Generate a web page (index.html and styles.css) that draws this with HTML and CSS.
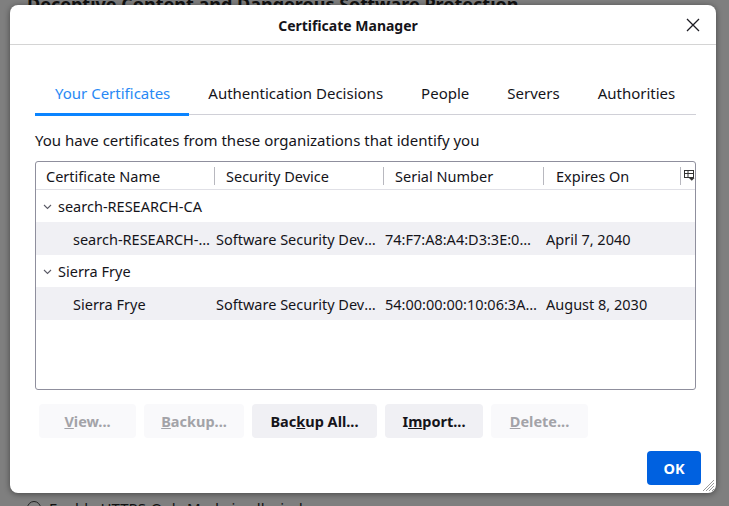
FILE: index.html
```html
<!DOCTYPE html>
<html>
<head>
<meta charset="utf-8">
<link rel="stylesheet" href="styles.css">
</head>
<body>
<div class="backdrop">
  <div class="bg-heading">Deceptive Content and Dangerous Software Protection</div>
  <div class="bg-spacer"></div>
  <div class="bg-option"><span class="bg-radio"></span>Enable HTTPS-Only Mode in all windows</div>
</div>

<div class="dialog">
  <div class="titlebar">
    <div class="title">Certificate Manager</div>
    <div class="close">
      <svg width="14" height="14" viewBox="0 0 14 14"><path d="M1 1 L13 13 M13 1 L1 13" stroke="#1c1b22" stroke-width="1.3" fill="none"/></svg>
    </div>
  </div>
  <div class="content">
    <div class="tabs">
      <div class="tab selected">Your Certificates</div>
      <div class="tab">Authentication Decisions</div>
      <div class="tab">People</div>
      <div class="tab">Servers</div>
      <div class="tab">Authorities</div>
    </div>
    <div class="desc">You have certificates from these organizations that identify you</div>
    <div class="tree">
      <div class="thead">
        <div class="th c1">Certificate Name</div>
        <div class="th c2">Security Device</div>
        <div class="th c3">Serial Number</div>
        <div class="th c4">Expires On</div>
        <div class="th picker">
          <svg width="11" height="11" viewBox="0 0 11 11"><rect x="0.5" y="0.5" width="9" height="7" fill="none" stroke="#333" stroke-width="1"/><path d="M0.5 3.5 H9.5 M4 0.5 V7.5" stroke="#333" stroke-width="1"/><path d="M5 8 L10.5 8 L7.75 10.8 Z" fill="#333"/></svg>
        </div>
      </div>
      <div class="row group"><div class="cell gname"><svg class="twisty" width="9" height="6" viewBox="0 0 9 6"><path d="M1 1 L4.5 4.5 L8 1" stroke="#5b5b66" stroke-width="1.1" fill="none"/></svg>search-RESEARCH-CA</div></div>
      <div class="row child">
        <div class="cell c1"><span class="ellip">search-RESEARCH-CA</span></div>
        <div class="cell c2"><span class="ellip">Software Security Device</span></div>
        <div class="cell c3"><span class="ellip">74:F7:A8:A4:D3:3E:0A:11</span></div>
        <div class="cell c4">April 7, 2040</div>
      </div>
      <div class="row group"><div class="cell gname"><svg class="twisty" width="9" height="6" viewBox="0 0 9 6"><path d="M1 1 L4.5 4.5 L8 1" stroke="#5b5b66" stroke-width="1.1" fill="none"/></svg>Sierra Frye</div></div>
      <div class="row child">
        <div class="cell c1"><span class="ellip">Sierra Frye</span></div>
        <div class="cell c2"><span class="ellip">Software Security Device</span></div>
        <div class="cell c3"><span class="ellip">54:00:00:00:10:06:3A:2B</span></div>
        <div class="cell c4">August 8, 2030</div>
      </div>
    </div>
    <div class="buttons">
      <div class="btn disabled w-view"><u>V</u>iew...</div>
      <div class="btn disabled w-backup"><u>B</u>ackup...</div>
      <div class="btn w-backupall">Bac<u>k</u>up All...</div>
      <div class="btn w-import">I<u>m</u>port...</div>
      <div class="btn disabled w-delete"><u>D</u>elete...</div>
    </div>
    <div class="footer">
      <div class="ok">OK</div>
    </div>
  </div>
  <div class="grip">
    <svg width="12" height="12" viewBox="0 0 12 12"><path d="M11 3 L3 11 M11 6 L6 11 M11 9 L9 11 M11 0 L0 11" stroke="#999" stroke-width="1"/></svg>
  </div>
</div>
</body>
</html>
```
FILE: styles.css
```css
html, body {
  margin: 0;
  padding: 0;
  width: 729px;
  height: 506px;
  overflow: hidden;
  background: #7f7f7f;
  font-family: "Noto Sans", "Open Sans", sans-serif;
}

.backdrop {
  display: flex;
  flex-direction: column;
  height: 506px;
  padding-left: 27px;
  box-sizing: border-box;
  color: #101010;
}

.bg-heading {
  font-weight: bold;
  font-size: 18px;
  margin-top: -8px;
  line-height: 24px;
  color: #121212;
}

.bg-spacer { flex: 1; }

.bg-option {
  display: flex;
  align-items: center;
  font-size: 15px;
  line-height: 20px;
  margin-bottom: -12px;
  color: #121212;
}

.bg-radio {
  width: 12px;
  height: 12px;
  border: 1px solid #222;
  border-radius: 50%;
  margin-right: 8px;
}

.dialog {
  position: absolute;
  left: 10px;
  top: 5px;
  width: 706px;
  height: 488px;
  background: #fff;
  border-radius: 8px;
  box-shadow: 0 1px 6px rgba(0,0,0,0.45);
  display: flex;
  flex-direction: column;
  color: #15141a;
}

.titlebar {
  height: 39px;
  border-bottom: 1px solid #d4d4d4;
  display: flex;
  align-items: center;
  justify-content: center;
  position: relative;
  padding-right: 30px;
}

.title {
  font-weight: bold;
  font-size: 14px;
  margin-top: 1px;
}

.close {
  position: absolute;
  right: 16px;
  top: 13px;
  width: 14px;
  height: 14px;
  display: flex;
}

.content {
  padding: 28px 20px 0 25px;
  display: flex;
  flex-direction: column;
  flex: 1;
}

.tabs {
  display: flex;
  border-bottom: 1px solid #d0d0d7;
  width: 661px;
  height: 42px;
  box-sizing: border-box;
}

.tab {
  font-size: 15px;
  padding: 10px 19px 0 19px;
  line-height: 20px;
  height: 42px;
  box-sizing: border-box;
  white-space: nowrap;
}

.tab.selected {
  color: #2889f5;
  border-bottom: 3px solid #0a84ff;
  margin-bottom: -1px;
  height: 43px;
  padding-left: 20px;
}

.tab:last-child { padding-right: 0; }

.desc {
  font-size: 15px;
  line-height: 20px;
  margin-top: 15px;
}

.tree {
  margin-top: 11px;
  width: 661px;
  height: 229px;
  box-sizing: border-box;
  border: 1px solid #8f8f9d;
  border-radius: 3px;
  display: flex;
  flex-direction: column;
  overflow: hidden;
}

.thead {
  display: flex;
  height: 27px;
  border-bottom: 1px solid #e0e0e6;
  flex-shrink: 0;
}

.th {
  font-size: 14.5px;
  line-height: 28px;
  padding-left: 10px;
  box-sizing: border-box;
  position: relative;
  white-space: nowrap;
}

.th + .th::before {
  content: "";
  position: absolute;
  left: -1px;
  top: 5px;
  height: 18px;
  border-left: 1px solid #b8b8bf;
}

.c1 { width: 179px; }
.c2 { width: 169px; }
.c3 { width: 160px; }
.c4 { width: 137px; }
.picker { width: 14px; padding-left: 3px; display: flex; align-items: center; }
.th.c2 { padding-left: 11px; }
.th.c3 { padding-left: 11px; }
.th.c4 { padding-left: 12px; }

.row {
  display: flex;
  height: 32px;
  align-items: center;
  flex-shrink: 0;
}

.row.group { height: 32px; }
.row.child { background: #f0f0f4; height: 33px; }

.cell {
  font-size: 14.5px;
  box-sizing: border-box;
  white-space: nowrap;
  overflow: hidden;
  padding-left: 1px;
  padding-right: 5px;
}

.cell.c4 { padding-left: 2px; }

.ellip {
  display: block;
  overflow: hidden;
  text-overflow: ellipsis;
}

.gname {
  padding-left: 7px;
  display: flex;
  align-items: center;
  line-height: 22px;
}

.twisty {
  margin-right: 6px;
  margin-top: 2px;
}

.row.child .cell.c1 { padding-left: 37px; }

.buttons {
  display: flex;
  margin-top: 14px;
  margin-left: 4px;
  gap: 8px;
}

.btn {
  height: 34px;
  border-radius: 4px;
  background: #f0f0f4;
  font-weight: bold;
  font-size: 14.5px;
  display: flex;
  align-items: center;
  justify-content: center;
  color: #15141a;
  box-sizing: border-box;
}

.btn.disabled {
  background: #f9f9fb;
  color: #a3a3a8;
}

.w-view { width: 97px; }
.w-backup { width: 100px; }
.w-backupall { width: 125px; }
.w-import { width: 98px; }
.w-delete { width: 97px; }

.footer {
  display: flex;
  justify-content: flex-end;
  margin-top: 13px;
}

.ok {
  width: 54px;
  height: 34px;
  border-radius: 4px;
  background: #0061e0;
  color: #fff;
  font-weight: bold;
  font-size: 14.5px;
  display: flex;
  align-items: center;
  justify-content: center;
  margin-right: -5px;
}

.grip {
  position: absolute;
  right: 1px;
  bottom: 1px;
  width: 12px;
  height: 12px;
  display: flex;
}
```
